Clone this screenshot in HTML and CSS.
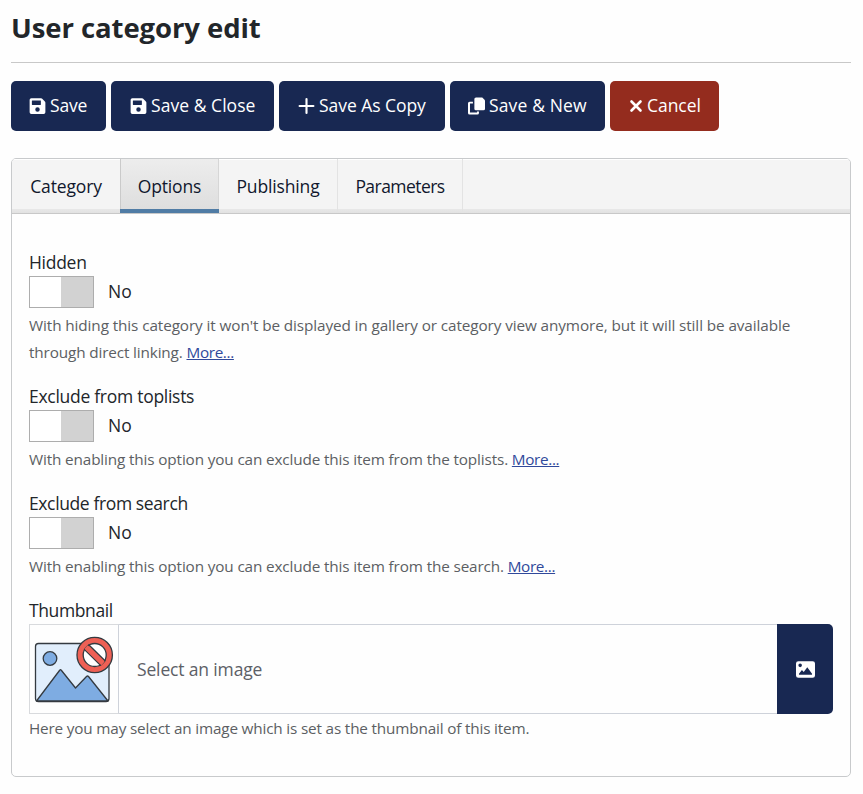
FILE: index.html
```html
<!DOCTYPE html>
<html lang="en">
<head>
<meta charset="utf-8">
<title>User category edit</title>
<link rel="stylesheet" href="styles.css">
</head>
<body>
<svg width="0" height="0" class="defs">
  <symbol id="save" viewBox="0 0 448 512"><path d="M433.9 129.9l-83.8-83.8A48 48 0 0 0 316.1 32H48A48 48 0 0 0 0 80v352a48 48 0 0 0 48 48h352a48 48 0 0 0 48-48V163.9a48 48 0 0 0-14.1-34zM224 416a64 64 0 1 1 0-128 64 64 0 0 1 0 128zm96-304.5V212a12 12 0 0 1-12 12H76a12 12 0 0 1-12-12V108a12 12 0 0 1 12-12h228.500a12 12 0 0 1 8.500 3.500l3.500 3.500a12 12 0 0 1 3.500 8.500z"/></symbol>
  <symbol id="copy" viewBox="0 0 512 512"><path d="M240 0h190l82 82v254a48 48 0 0 1-48 48H240a48 48 0 0 1-48-48V48a48 48 0 0 1 48-48z"/><path d="M48 128h100v56H60v270h210v-32h60v42a48 48 0 0 1-48 48H48a48 48 0 0 1-48-48V176a48 48 0 0 1 48-48z"/></symbol>
  <symbol id="image" viewBox="0 0 512 512"><path fill-rule="evenodd" d="M64 32h384a64 64 0 0 1 64 64v320a64 64 0 0 1-64 64H64a64 64 0 0 1-64-64V96a64 64 0 0 1 64-64zM112 96a48 48 0 1 0 0 96 48 48 0 0 0 0-96zM304 192l-96 130-48-50-80 96v32h352v-32z"/></symbol>
</svg>
<h1>User category edit</h1>
<div class="toolbar">
  <button class="btn save"><svg class="icon"><use href="#save"/></svg><span>Save</span></button>
  <button class="btn close"><svg class="icon"><use href="#save"/></svg><span>Save &amp; Close</span></button>
  <button class="btn as-copy"><svg class="icon" viewBox="0 0 16 16"><path d="M8 1.500v13M1.500 8h13" fill="none" stroke="currentColor" stroke-width="2" stroke-linecap="round"/></svg><span>Save As Copy</span></button>
  <button class="btn new"><svg class="icon"><use href="#copy"/></svg><span>Save &amp; New</span></button>
  <button class="btn cancel"><svg class="icon cross" viewBox="0 0 14 18"><path d="M2.500 4.500l9 9M11.500 4.500l-9 9" fill="none" stroke="currentColor" stroke-width="2.600" stroke-linecap="round"/></svg><span>Cancel</span></button>
</div>
<main class="panel">
  <nav class="tabs">
    <a class="tab category"><span>Category</span></a>
    <a class="tab options active"><span>Options</span></a>
    <a class="tab publishing"><span>Publishing</span></a>
    <a class="tab parameters"><span>Parameters</span></a>
  </nav>
  <div class="content">
    <section class="field">
      <div class="label"><span>Hidden</span></div>
      <div class="switch"><i class="toggle"></i><span>No</span></div>
      <p class="help"><span class="long">With hiding this category it won't be displayed in gallery or category view anymore, but it will still be available</span><br><span>through direct linking. <a href="#">More...</a></span></p>
    </section>
    <section class="field">
      <div class="label"><span>Exclude from toplists</span></div>
      <div class="switch"><i class="toggle"></i><span>No</span></div>
      <p class="help"><span>With enabling this option you can exclude this item from the toplists. <a href="#">More...</a></span></p>
    </section>
    <section class="field">
      <div class="label search"><span>Exclude from search</span></div>
      <div class="switch"><i class="toggle"></i><span>No</span></div>
      <p class="help"><span>With enabling this option you can exclude this item from the search. <a href="#">More...</a></span></p>
    </section>
    <section class="field">
      <div class="label search"><span>Thumbnail</span></div>
      <div class="media">
        <div class="preview">
          <svg width="88" height="88" viewBox="0 0 88 88" stroke="#343a40" stroke-width="1.300" stroke-linejoin="round">
            <rect x="5.500" y="18.500" width="73.500" height="58" rx="3" fill="#e1eefc"/>
            <circle cx="20" cy="33.500" r="6.800" fill="#7eace2"/>
            <path d="M6.500 76L29.500 45.500Q30.500 44 31.500 45.500L45.500 63L56.500 51.500Q57.500 50.500 58.500 51.500L78 76Z" fill="#7eace2"/>
            <circle cx="64.700" cy="30" r="17.700" fill="#ee6055"/>
            <circle cx="64.700" cy="30" r="11.500" fill="#fff"/>
            <path d="M54.500 24.500L70.500 40.200L75 35.700L59 20Z" fill="#ee6055"/>
            <path d="M56 22L73 38.500" fill="none" stroke="#ee6055" stroke-width="4.600"/>
          </svg>
        </div>
        <div class="input"><span>Select an image</span></div>
        <button class="picker"><svg class="pic"><use href="#image"/></svg></button>
      </div>
      <p class="help thumb"><span>Here you may select an image which is set as the thumbnail of this item.</span></p>
    </section>
  </div>
</main>
</body>
</html>
```
FILE: styles.css
```css
* { box-sizing: border-box; }
body { margin: 0; padding: 0 12px 0 11px; background: #fefefe; color: #22262a; font: 17.500px/27px "Open Sans", "Noto Sans", sans-serif; }
.defs { position: absolute; }
h1 { margin: 0; height: 63px; padding-top: 8px; border-bottom: 1px solid #c8c8c8; font-size: 27.500px; line-height: 40px; font-weight: 700; letter-spacing: -0.08px; white-space: nowrap; }
.toolbar { display: flex; gap: 5px; margin-top: 18px; }
.btn { display: flex; align-items: center; gap: 4px; height: 50px; padding: 0 0 0 19px; border: 0; border-radius: 5px; background: #182852; color: #fff; font: inherit; letter-spacing: -0.05px; white-space: nowrap; }
.btn span { padding-bottom: 1px; }
.save { width: 95px; padding-left: 18px; letter-spacing: -0.2px; }
.close { width: 163px; letter-spacing: 0.05px; }
.as-copy { width: 166px; }
.new { width: 155px; padding-left: 18px; letter-spacing: 0.15px; }
.cancel { width: 109px; background: #942c1e; }
.icon { width: 17px; height: 18px; fill: currentColor; flex: none; }
.cross { width: 14px; }
.panel { margin-top: 27px; height: 619px; border: 1px solid #c8cacc; border-radius: 5px; overflow: hidden; }
.tabs { display: flex; height: 55px; border-bottom: 1px solid #c8c8c8; background: linear-gradient(#f4f4f4 0 50px, #e8e8e8 50px, #e2e2e2); box-shadow: inset 0 1px #fff; }
.tab { display: flex; justify-content: center; padding-top: 14px; border-right: 1px solid #e3e3e3; color: #10172d; letter-spacing: -0.15px; }
.category { width: 108px; border-right: 0; }
.options { width: 99px; }
.publishing { width: 119px; }
.parameters { width: 125px; letter-spacing: -0.55px; }
.active { background: linear-gradient(#ededed, #dedede); border-bottom: 4px solid #507ca5; border-right: 0; box-shadow: inset 1px 0 #cacaca, inset -1px 0 #d6d6d6; }
.content { padding: 35px 17px 0; }
.field { margin-bottom: 17px; }
.label { height: 27px; letter-spacing: -0.28px; }
.search { letter-spacing: -0.38px; }
.switch { display: flex; align-items: center; gap: 14px; height: 32px; }
.switch span { padding-bottom: 2px; }
.toggle { width: 65px; height: 32px; border: 1px solid #adadad; background: linear-gradient(90deg, #fff 31px, #d2d2d2 31px); }
.help { margin: 4px 0 0; font-size: 15.300px; line-height: 27px; letter-spacing: -0.14px; color: #5c5f63; white-space: nowrap; }
.long { letter-spacing: -0.1px; }
.help a { color: #30499b; text-decoration: underline; letter-spacing: -0.35px; }
.media { display: flex; height: 90px; }
.preview { width: 90px; border: 1px solid #d8dadd; border-right: 1px solid #ced2da; }
.preview svg { display: block; }
.input { flex: 1; border: solid #ced2da; border-width: 1px 0; padding-left: 18px; line-height: 88px; color: #5c6066; letter-spacing: -0.15px; }
.picker { width: 56px; padding: 0; border: 0; border-radius: 0 5px 5px 0; background: #182852; color: #fff; display: grid; place-items: center; }
.pic { width: 19px; height: 19px; fill: currentColor; }
.thumb { margin-top: 1px; letter-spacing: -0.17px; }
```
